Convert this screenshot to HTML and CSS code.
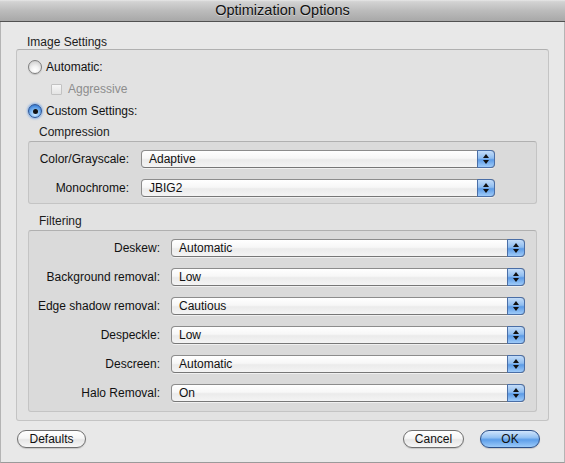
FILE: index.html
```html
<!DOCTYPE html>
<html>
<head>
<meta charset="utf-8">
<title>Optimization Options</title>
<link rel="stylesheet" href="styles.css">
</head>
<body>
<div class="window">
  <div class="titlebar">Optimization Options</div>
  <div class="content">
    <div class="section-label top-label">Image Settings</div>
    <div class="group outer">
      <div class="option-row">
        <span class="radio"></span><span class="opt-text">Automatic:</span>
      </div>
      <div class="option-row sub">
        <span class="checkbox"></span><span class="opt-text disabled">Aggressive</span>
      </div>
      <div class="option-row">
        <span class="radio selected"><span class="dot"></span></span><span class="opt-text">Custom Settings:</span>
      </div>

      <div class="section-label inner-label">Compression</div>
      <div class="group inner compression">
        <div class="field-label">Color/Grayscale:</div>
        <div class="popup"><span class="popup-text">Adaptive</span><span class="popup-arrows"><span class="up"></span><span class="down"></span></span></div>
        <div class="field-label">Monochrome:</div>
        <div class="popup"><span class="popup-text">JBIG2</span><span class="popup-arrows"><span class="up"></span><span class="down"></span></span></div>
      </div>

      <div class="section-label inner-label filter-label">Filtering</div>
      <div class="group inner filtering">
        <div class="field-label">Deskew:</div>
        <div class="popup"><span class="popup-text">Automatic</span><span class="popup-arrows"><span class="up"></span><span class="down"></span></span></div>
        <div class="field-label">Background removal:</div>
        <div class="popup"><span class="popup-text">Low</span><span class="popup-arrows"><span class="up"></span><span class="down"></span></span></div>
        <div class="field-label">Edge shadow removal:</div>
        <div class="popup"><span class="popup-text">Cautious</span><span class="popup-arrows"><span class="up"></span><span class="down"></span></span></div>
        <div class="field-label">Despeckle:</div>
        <div class="popup"><span class="popup-text">Low</span><span class="popup-arrows"><span class="up"></span><span class="down"></span></span></div>
        <div class="field-label">Descreen:</div>
        <div class="popup"><span class="popup-text">Automatic</span><span class="popup-arrows"><span class="up"></span><span class="down"></span></span></div>
        <div class="field-label">Halo Removal:</div>
        <div class="popup"><span class="popup-text">On</span><span class="popup-arrows"><span class="up"></span><span class="down"></span></span></div>
      </div>
    </div>

    <div class="buttons">
      <div class="button defaults">Defaults</div>
      <div class="spacer"></div>
      <div class="button cancel">Cancel</div>
      <div class="button ok">OK</div>
    </div>
  </div>
</div>
</body>
</html>
```

FILE: styles.css
```css
html, body {
  margin: 0;
  padding: 0;
  background: #e8e8e8;
}

body {
  font-family: "Liberation Sans", Arial, sans-serif;
  font-size: 12px;
  color: #000;
}

.window {
  width: 565px;
  height: 463px;
  box-sizing: border-box;
  background: #e8e8e8;
  border-left: 1px solid #b4b4b4;
  border-right: 1px solid #b4b4b4;
  border-bottom: 1px solid #9a9a9a;
  display: flex;
  flex-direction: column;
}

.titlebar {
  height: 22px;
  box-sizing: border-box;
  border-bottom: 1px solid #515151;
  background: linear-gradient(#e8e8e8 0%, #d3d3d3 8%, #bcbcbc 50%, #a8a8a8 100%);
  text-align: center;
  font-size: 14.5px;
  line-height: 21px;
  color: #111;
  text-shadow: 0 1px 0 rgba(255,255,255,0.45);
  margin: 0 -1px;
}

.content {
  padding: 13px 15px 0 15px;
  display: flex;
  flex-direction: column;
}

.section-label {
  line-height: 14px;
  height: 14px;
  color: #1c1c1c;
}

.top-label {
  padding-left: 11px;
}

.group {
  border: 1px solid #c4c4c4;
  border-top-color: #b0b0b0;
  border-radius: 3px;
}

.outer {
  height: 372px;
  box-sizing: border-box;
  background: #e2e2e2;
  padding: 10px 11px 0 11px;
  display: flex;
  flex-direction: column;
}

.option-row {
  display: flex;
  align-items: center;
  height: 14px;
  margin-bottom: 8px;
}

.option-row.sub {
  padding-left: 23px;
}

.option-row .opt-text {
  margin-left: 4px;
  line-height: 14px;
  color: #111;
}

.opt-text.disabled {
  color: #8d8d8d;
  margin-left: 6px;
}

.radio {
  width: 14px;
  height: 14px;
  box-sizing: border-box;
  border-radius: 50%;
  border: 1px solid #7e7e7e;
  background: radial-gradient(circle at 50% 75%, #ffffff 0%, #f3f3f3 35%, #d6d6d6 75%, #c4c4c4 100%);
  box-shadow: 0 1px 1px rgba(0,0,0,0.15);
  display: flex;
  align-items: center;
  justify-content: center;
}

.radio.selected {
  border-color: #2c5597;
  background: radial-gradient(circle at 50% 75%, #d6ecff 0%, #8dc2f5 35%, #3b81d8 80%, #2b62b3 100%);
  box-shadow: 0 0 2px 1px rgba(72,140,230,0.55);
}

.radio .dot {
  width: 5px;
  height: 5px;
  border-radius: 50%;
  background: #111;
}

.checkbox {
  width: 11px;
  height: 11px;
  box-sizing: border-box;
  border: 1px solid #c2c2c2;
  background: linear-gradient(#f7f7f7, #e3e3e3);
  border-radius: 1px;
}

.inner-label {
  padding-left: 11px;
  margin-top: -1px;
}

.filter-label {
  margin-top: 10px;
}

.inner {
  background: #dadada;
  display: grid;
  align-items: center;
  row-gap: 11px;
  column-gap: 12px;
  margin-top: 2px;
}

.compression {
  grid-template-columns: 100px 354px;
  padding: 8px 0 7px 0;
  height: 63px;
  box-sizing: border-box;
}

.filtering {
  grid-template-columns: 131px 354px;
  column-gap: 11px;
  padding: 8px 0 9px 0;
  height: 182px;
  box-sizing: border-box;
}

.field-label {
  text-align: right;
  color: #111;
  line-height: 14px;
}

.popup {
  height: 18px;
  box-sizing: border-box;
  border: 1px solid #8c8c8c;
  border-bottom-color: #777;
  border-radius: 4px;
  background: linear-gradient(#ffffff 0%, #f7f7f7 45%, #ebebeb 55%, #f4f4f4 100%);
  display: flex;
  align-items: stretch;
  box-shadow: 0 1px 0 rgba(255,255,255,0.6);
}

.popup-text {
  flex: 1;
  padding-left: 7px;
  line-height: 16px;
  color: #111;
}

.popup-arrows {
  width: 16px;
  margin: -1px -1px -1px 0;
  border: 1px solid #4a6ea6;
  border-radius: 0 4px 4px 0;
  background: linear-gradient(#c3dcf8 0%, #8fbdf0 45%, #5c9be6 55%, #9fcbf9 100%);
  display: flex;
  flex-direction: column;
  align-items: center;
  justify-content: center;
  gap: 2px;
}

.popup-arrows .up {
  width: 0;
  height: 0;
  border-left: 3px solid transparent;
  border-right: 3px solid transparent;
  border-bottom: 4px solid #111;
}

.popup-arrows .down {
  width: 0;
  height: 0;
  border-left: 3px solid transparent;
  border-right: 3px solid transparent;
  border-top: 4px solid #111;
}

.buttons {
  display: flex;
  align-items: center;
  margin-top: 9px;
  padding-left: 1px;
  padding-right: 9px;
}

.spacer {
  flex: 1;
}

.button {
  height: 18px;
  box-sizing: border-box;
  border: 1px solid #6f6f6f;
  border-radius: 9px;
  background: linear-gradient(#ffffff 0%, #f6f6f6 45%, #e6e6e6 55%, #f6f6f6 100%);
  text-align: center;
  line-height: 16px;
  color: #111;
  box-shadow: 0 1px 1px rgba(0,0,0,0.15);
}

.defaults {
  width: 69px;
}

.cancel {
  width: 61px;
}

.ok {
  width: 60px;
  margin-left: 16px;
  border-color: #2b4f88;
  background: linear-gradient(#cfe4fb 0%, #96c3f3 40%, #5d9ee9 55%, #9bcaf9 100%);
}
```
